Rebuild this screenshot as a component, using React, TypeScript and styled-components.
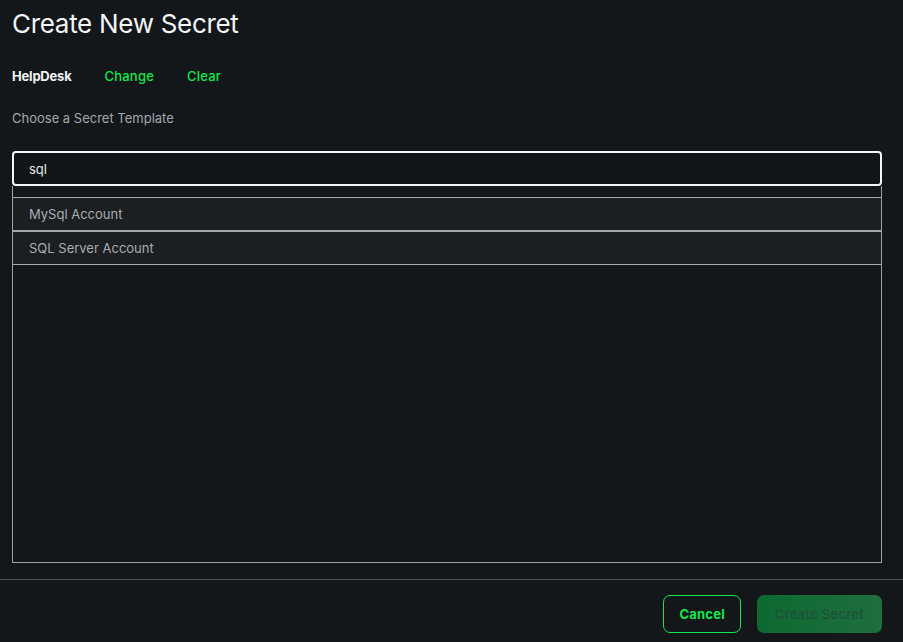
import React, { useState } from 'react'
import styled, { createGlobalStyle } from 'styled-components'

const GlobalStyle = createGlobalStyle`
  html, body {
    margin: 0;
    padding: 0;
    background: #13171a;
  }
  body {
    font-family: Inter, "Noto Sans", sans-serif;
    color: #e8eaec;
  }
`

const templates = ['MySql Account', 'SQL Server Account']

const App: React.FC = () => {
  const [query, setQuery] = useState<string>('sql')

  return (
    <>
      <GlobalStyle />
      <Page>
        <Body>
          <Title>Create New Secret</Title>
          <FolderRow>
            <FolderName>HelpDesk</FolderName>
            <LinkButton>Change</LinkButton>
            <LinkButton>Clear</LinkButton>
          </FolderRow>
          <Label>Choose a Secret Template</Label>
          <Picker>
            <SearchInput
              value={query}
              onChange={e => setQuery(e.target.value)}
              spellCheck={false}
            />
            <ResultList>
              {templates.map(t => (
                <ResultItem key={t}>{t}</ResultItem>
              ))}
            </ResultList>
          </Picker>
        </Body>
        <Footer>
          <OutlineButton>Cancel</OutlineButton>
          <PrimaryButton disabled>Create Secret</PrimaryButton>
        </Footer>
      </Page>
    </>
  )
}

export default App

const Page = styled.div`
  width: 903px;
  height: 642px;
  display: flex;
  flex-direction: column;
  box-sizing: border-box;
`

const Body = styled.div`
  padding: 0 21px 0 12px;
  display: flex;
  flex-direction: column;
`

const Title = styled.h1`
  margin: 7px 0 0;
  font-size: 26px;
  font-weight: 400;
  letter-spacing: -0.3px;
  line-height: 34px;
  color: #f2f4f5;
`

const FolderRow = styled.div`
  display: flex;
  align-items: center;
  gap: 33px;
  margin-top: 25px;
  height: 20px;
`

const FolderName = styled.span`
  font-size: 13px;
  font-weight: 700;
  color: #f0f2f3;
  letter-spacing: -0.2px;
`

const LinkButton = styled.span`
  font-size: 13px;
  font-weight: 500;
  color: #17e64b;
  letter-spacing: 0.2px;
  cursor: pointer;
`

const Label = styled.div`
  margin-top: 23px;
  font-size: 13px;
  color: #a3a7ab;
  line-height: 18px;
`

const Picker = styled.div`
  margin-top: 24px;
  display: flex;
  flex-direction: column;
`

const SearchInput = styled.input`
  height: 35px;
  box-sizing: border-box;
  border: 2px solid #f4f5f6;
  border-radius: 4px;
  background: #111518;
  color: #e8eaec;
  padding: 0 15px;
  font-family: Inter, "Noto Sans", sans-serif;
  font-size: 13px;
  outline: none;
`

const ResultList = styled.div`
  height: 377px;
  box-sizing: border-box;
  border: 1px solid #9ea3a7;
  border-top: none;
  padding-top: 11px;
  display: flex;
  flex-direction: column;
`

const ResultItem = styled.div`
  height: 34px;
  box-sizing: border-box;
  border-top: 1px solid #a4a9ad;
  border-bottom: 1px solid #a4a9ad;
  background: #1c1f22;
  display: flex;
  align-items: center;
  padding: 0 16px;
  font-size: 13px;
  color: #a8acb0;
`

const Footer = styled.div`
  margin-top: auto;
  border-top: 1px solid #4e5256;
  height: 63px;
  display: flex;
  justify-content: flex-end;
  align-items: flex-start;
  gap: 16px;
  padding: 15px 21px 0 0;
  box-sizing: border-box;
`

const OutlineButton = styled.button`
  height: 38px;
  padding: 0 15px;
  border: 1px solid #17e64b;
  border-radius: 7px;
  background: transparent;
  color: #17e64b;
  font-family: Inter, "Noto Sans", sans-serif;
  font-size: 13px;
  font-weight: 700;
  letter-spacing: 0.2px;
  cursor: pointer;
`

const PrimaryButton = styled.button`
  height: 38px;
  padding: 0 18px;
  border: none;
  border-radius: 7px;
  background: linear-gradient(90deg, #0c6a2f, #1f6e3e);
  color: #1f4f3c;
  font-family: Inter, "Noto Sans", sans-serif;
  font-size: 13px;
  font-weight: 500;
  letter-spacing: 0.3px;
`
